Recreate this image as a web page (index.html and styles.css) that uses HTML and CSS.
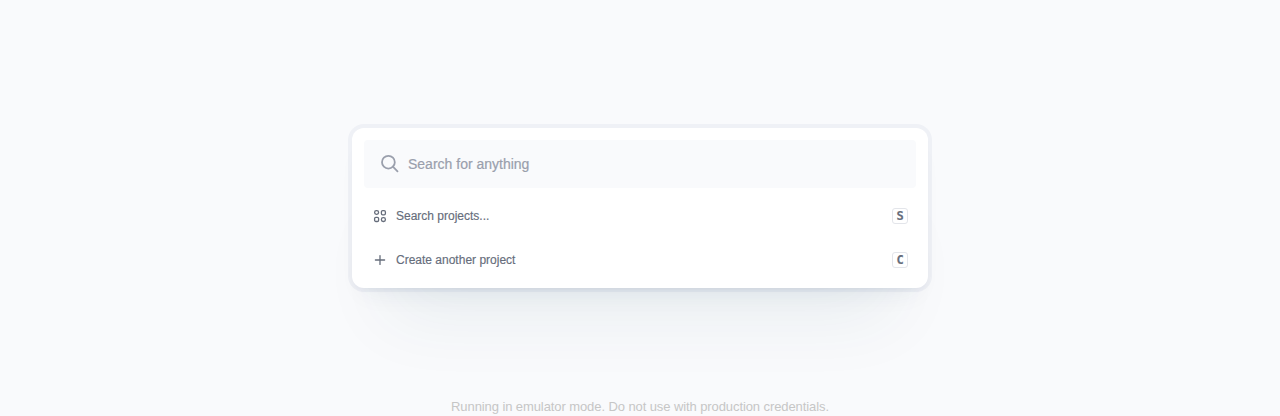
FILE: index.html
```html
<!DOCTYPE html>
<html lang="en">
<head>
<meta charset="utf-8">
<title>Search</title>
<link rel="stylesheet" href="styles.css">
</head>
<body>
<main class="palette">
  <div class="search">
    <svg class="search-icon" viewBox="0 0 20 20"><circle cx="8.4" cy="8.2" r="6.4"/><path d="M12.9 12.7L17.5 17.3"/></svg>
    <span>Search for anything</span>
  </div>
  <div class="row">
    <svg class="icon" viewBox="0 0 16 16"><rect x="2.6" y="2.6" width="4" height="3.8" rx="1.8"/><rect x="9.4" y="2.6" width="4" height="4.2" rx="1.3"/><rect x="2.6" y="9.3" width="4" height="4.2" rx="1.3"/><rect x="9.4" y="9.7" width="4" height="3.8" rx="1.8"/></svg>
    <span class="label">Search projects...</span>
    <kbd>S</kbd>
  </div>
  <div class="row">
    <svg class="icon" viewBox="0 0 16 16"><path d="M8 3.6v8.8M3.4 8h9.2"/></svg>
    <span class="label">Create another project</span>
    <kbd>C</kbd>
  </div>
</main>
<p class="notice">Running in emulator mode. Do not use with production credentials.</p>
</body>
</html>
```

FILE: styles.css
```css
* { box-sizing: border-box; }
body {
  margin: 0;
  height: 416px;
  padding-top: 128px;
  overflow: hidden;
  display: flex;
  flex-direction: column;
  align-items: center;
  background: #f9fafc;
  font-family: "Liberation Sans", Arial, sans-serif;
}
.palette {
  width: 576px;
  height: 160px;
  flex: none;
  padding: 12px 12px 6px;
  border-radius: 12px;
  background: #fff;
  box-shadow:
    0 0 0 4px rgba(90, 100, 150, 0.06),
    0 4px 6px -4px rgba(50, 70, 110, 0.08),
    0 16px 24px -12px rgba(30, 60, 80, 0.07),
    0 64px 72px -36px rgba(20, 70, 90, 0.07);
}
.search {
  display: flex;
  align-items: center;
  gap: 8px;
  height: 48px;
  padding: 0 16px;
  margin-bottom: 6px;
  border-radius: 4px;
  background: #f9fafc;
  color: #9a9fac;
  font-size: 14px;
  -webkit-text-stroke: 0.2px currentColor;
}
svg { fill: none; stroke: currentColor; flex: none; }
.search-icon { width: 20px; height: 20px; stroke-width: 1.8; stroke-linecap: round; }
.row {
  display: flex;
  align-items: center;
  gap: 8px;
  height: 44px;
  padding: 0 8px;
  color: #666d7b;
  font-size: 12px;
  -webkit-text-stroke: 0.15px currentColor;
}
.icon { width: 16px; height: 16px; stroke-width: 1.3; stroke-linecap: round; }
.label { flex: 1; }
kbd {
  display: flex;
  align-items: center;
  justify-content: center;
  width: 16px;
  height: 16px;
  border: 1px solid #e3e5ea;
  border-radius: 3px;
  font: bold 12px "DejaVu Sans Mono", monospace;
}
.notice {
  margin: 111px 0 0;
  color: #c6c6c6;
  font-size: 13px;
  line-height: 16px;
  letter-spacing: -0.09px;
  white-space: nowrap;
}
```
